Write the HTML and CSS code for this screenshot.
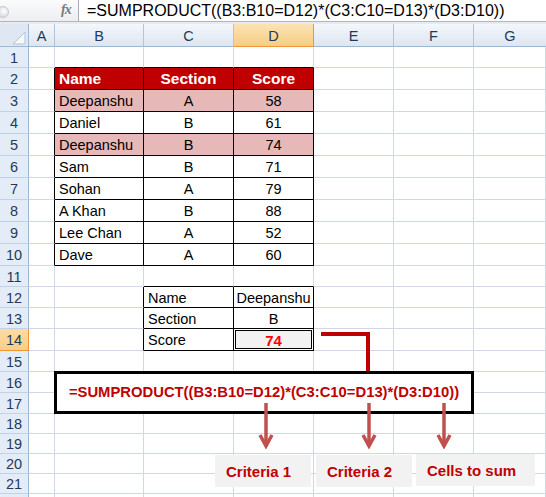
FILE: index.html
```html
<!DOCTYPE html>
<html>
<head>
<meta charset="utf-8">
<link rel="stylesheet" href="styles.css">
</head>
<body>
<div class="page">
  <div class="fbar">
    <div class="namebox"><span class="knob"></span><span class="fx">fx</span></div>
    <div class="ftext">=SUMPRODUCT((B3:B10=D12)*(C3:C10=D13)*(D3:D10))</div>
  </div>
  <div class="spacer"></div>
  <div class="sheet">
    <div class="corner"><svg class="tri" width="14" height="14" viewBox="0 0 14 14"><polygon points="13,1 13,13 1,13" fill="#f4f7fb" stroke="#b4c3d6" stroke-width="1"/></svg></div>
    <div class="ch">A</div><div class="ch">B</div><div class="ch">C</div><div class="ch sel">D</div><div class="ch">E</div><div class="ch">F</div><div class="ch last">G</div>

    <div class="rh">1</div><div class="c"></div><div class="c bb"></div><div class="c bb"></div><div class="c bb"></div><div class="c"></div><div class="c"></div><div class="c"></div>
    <div class="rh">2</div><div class="c br"></div><div class="c t hd">Name</div><div class="c t hd ctr">Section</div><div class="c t hd ctr">Score</div><div class="c"></div><div class="c"></div><div class="c"></div>
    <div class="rh">3</div><div class="c br"></div><div class="c t pk">Deepanshu</div><div class="c t pk ctr">A</div><div class="c t pk ctr">58</div><div class="c"></div><div class="c"></div><div class="c"></div>
    <div class="rh">4</div><div class="c br"></div><div class="c t">Daniel</div><div class="c t ctr">B</div><div class="c t ctr">61</div><div class="c"></div><div class="c"></div><div class="c"></div>
    <div class="rh">5</div><div class="c br"></div><div class="c t pk">Deepanshu</div><div class="c t pk ctr">B</div><div class="c t pk ctr">74</div><div class="c"></div><div class="c"></div><div class="c"></div>
    <div class="rh">6</div><div class="c br"></div><div class="c t">Sam</div><div class="c t ctr">B</div><div class="c t ctr">71</div><div class="c"></div><div class="c"></div><div class="c"></div>
    <div class="rh">7</div><div class="c br"></div><div class="c t">Sohan</div><div class="c t ctr">A</div><div class="c t ctr">79</div><div class="c"></div><div class="c"></div><div class="c"></div>
    <div class="rh">8</div><div class="c br"></div><div class="c t">A Khan</div><div class="c t ctr">B</div><div class="c t ctr">88</div><div class="c"></div><div class="c"></div><div class="c"></div>
    <div class="rh">9</div><div class="c br"></div><div class="c t">Lee Chan</div><div class="c t ctr">A</div><div class="c t ctr">52</div><div class="c"></div><div class="c"></div><div class="c"></div>
    <div class="rh">10</div><div class="c br"></div><div class="c t">Dave</div><div class="c t ctr">A</div><div class="c t ctr">60</div><div class="c"></div><div class="c"></div><div class="c"></div>
    <div class="rh">11</div><div class="c"></div><div class="c"></div><div class="c bb"></div><div class="c bb"></div><div class="c"></div><div class="c"></div><div class="c"></div>
    <div class="rh">12</div><div class="c"></div><div class="c br"></div><div class="c t">Name</div><div class="c t ctr">Deepanshu</div><div class="c"></div><div class="c"></div><div class="c"></div>
    <div class="rh">13</div><div class="c"></div><div class="c br"></div><div class="c t">Section</div><div class="c t ctr">B</div><div class="c"></div><div class="c"></div><div class="c"></div>
    <div class="rh sel">14</div><div class="c"></div><div class="c br"></div><div class="c t">Score</div><div class="c t res-cell"><div class="res">74</div></div><div class="c"></div><div class="c"></div><div class="c"></div>
    <div class="rh">15</div><div class="c"></div><div class="c"></div><div class="c"></div><div class="c"></div><div class="c"></div><div class="c"></div><div class="c"></div>
    <div class="rh">16</div><div class="c"></div><div class="c"></div><div class="c"></div><div class="c"></div><div class="c"></div><div class="c"></div><div class="c"></div>
    <div class="rh">17</div><div class="c"></div><div class="c"></div><div class="c"></div><div class="c"></div><div class="c"></div><div class="c"></div><div class="c"></div>
    <div class="rh">18</div><div class="c"></div><div class="c"></div><div class="c"></div><div class="c"></div><div class="c"></div><div class="c"></div><div class="c"></div>
    <div class="rh">19</div><div class="c"></div><div class="c"></div><div class="c"></div><div class="c"></div><div class="c"></div><div class="c"></div><div class="c"></div>
    <div class="rh">20</div><div class="c"></div><div class="c"></div><div class="c"></div><div class="c"></div><div class="c"></div><div class="c"></div><div class="c"></div>
    <div class="rh">21</div><div class="c"></div><div class="c"></div><div class="c"></div><div class="c"></div><div class="c"></div><div class="c"></div><div class="c"></div>
    <div class="rh"></div><div class="c"></div><div class="c"></div><div class="c"></div><div class="c"></div><div class="c"></div><div class="c"></div><div class="c"></div>
  </div>

  <div class="connector"></div>
  <div class="fbox">=SUMPRODUCT((B3:B10=D12)*(C3:C10=D13)*(D3:D10))</div>

  <svg class="arrow a1" width="16" height="46" viewBox="0 0 16 46"><line x1="8" y1="0" x2="8" y2="43" stroke="#c0504d" stroke-width="3.5"/><polyline points="2,32 8,43 14,32" fill="none" stroke="#c0504d" stroke-width="3.5" stroke-linejoin="miter"/></svg>
  <svg class="arrow a2" width="16" height="46" viewBox="0 0 16 46"><line x1="8" y1="0" x2="8" y2="43" stroke="#c0504d" stroke-width="3.5"/><polyline points="2,32 8,43 14,32" fill="none" stroke="#c0504d" stroke-width="3.5" stroke-linejoin="miter"/></svg>
  <svg class="arrow a3" width="16" height="46" viewBox="0 0 16 46"><line x1="8" y1="0" x2="8" y2="43" stroke="#c0504d" stroke-width="3.5"/><polyline points="2,32 8,43 14,32" fill="none" stroke="#c0504d" stroke-width="3.5" stroke-linejoin="miter"/></svg>

  <div class="label l1">Criteria 1</div>
  <div class="label l2">Criteria 2</div>
  <div class="label l3">Cells to sum</div>
</div>
</body>
</html>
```

FILE: styles.css
```css
html, body {
  margin: 0;
  padding: 0;
  background: #ffffff;
}

.page {
  position: relative;
  width: 546px;
  height: 497px;
  overflow: hidden;
  font-family: "Liberation Sans", Arial, sans-serif;
  color: #000;
}

/* formula bar */
.fbar {
  display: flex;
  height: 21px;
  border-bottom: 1px solid #a7b9d1;
  background: #fff;
}

.namebox {
  position: relative;
  width: 79px;
  flex: none;
  border-right: 1px solid #a3acb8;
  background: linear-gradient(#fbfbfc, #eceef1);
  box-sizing: border-box;
}

.knob {
  position: absolute;
  left: -3px;
  top: 6px;
  width: 10px;
  height: 10px;
  border-radius: 50%;
  background: radial-gradient(circle at 60% 40%, #ffffff, #c9ccd1);
  border: 1px solid #c4c8ce;
}

.fx {
  position: absolute;
  left: 61px;
  top: 2px;
  font-family: "Liberation Serif", "Times New Roman", serif;
  font-style: italic;
  font-weight: bold;
  font-size: 14px;
  color: #7a7a7a;
  letter-spacing: -1px;
}

.ftext {
  flex: 1;
  padding-left: 8px;
  font-size: 16px;
  line-height: 21px;
  white-space: nowrap;
  color: #000;
}

.spacer {
  height: 2px;
  background: #e4ebf5;
}

/* sheet grid */
.sheet {
  display: grid;
  grid-template-columns: 29px 26px 89px 90px 80px 80px 80px 1fr;
  grid-template-rows: 23px 21px repeat(9, 22px) 21px 21px 21px 22px 21px 21px 21px 20px 20px 20px 20px 20px;
}

.corner {
  background: #dfe7f3;
  border-right: 1px solid #9eb6ce;
  border-bottom: 1px solid #9eb6ce;
  display: flex;
  align-items: flex-end;
  justify-content: flex-end;
  padding: 0 2px 1px 0;
  box-sizing: border-box;
}

.tri {
  display: block;
}

.ch {
  background: linear-gradient(#f4f7fb, #dde6f1);
  border-right: 1px solid #b3c5da;
  border-bottom: 1px solid #9eb6ce;
  display: flex;
  align-items: center;
  justify-content: center;
  font-size: 14.5px;
  color: #24395a;
  padding-top: 2px;
  box-sizing: border-box;
}

.ch.sel {
  background: linear-gradient(#fbe3b5, #f7cd82);
  border-right-color: #f29536;
  border-bottom-color: #f29536;
}

.ch.last {
  border-right: none;
}

.rh {
  background: #e4ecf7;
  border-right: 1px solid #9eb6ce;
  border-bottom: 1px solid #c2d1e4;
  display: flex;
  align-items: center;
  justify-content: center;
  font-size: 14.5px;
  color: #24395a;
  padding-top: 1px;
  box-sizing: border-box;
}

.rh.sel {
  background: linear-gradient(#fbdca3, #f8cf86);
  border-right-color: #f29536;
  border-bottom-color: #f29536;
}

.c {
  border-right: 1px solid #d0d7e5;
  border-bottom: 1px solid #d0d7e5;
  display: flex;
  align-items: center;
  padding: 1px 3px 0 4px;
  font-size: 14.5px;
  white-space: nowrap;
  overflow: hidden;
  box-sizing: border-box;
  min-width: 0;
}

.c.ctr {
  justify-content: center;
  padding-left: 0;
  padding-right: 0;
}

.c.t {
  border-right-color: #000;
  border-bottom-color: #000;
}

.c.br {
  border-right-color: #000;
}

.c.bb {
  border-bottom-color: #000;
}

.c.hd {
  background: #c00000;
  color: #ffffff;
  font-weight: bold;
  font-size: 15.5px;
}

.c.pk {
  background: #e6b8b7;
}

.c.res-cell {
  padding: 1px;
  align-items: stretch;
}

.res {
  flex: 1;
  border: 1px solid #000;
  background: #f2f2f2;
  color: #ff0000;
  font-weight: bold;
  font-size: 15px;
  display: flex;
  align-items: center;
  justify-content: center;
  padding-top: 1px;
}

/* floating drawing objects */
.connector {
  position: absolute;
  left: 321px;
  top: 332px;
  width: 49px;
  height: 39px;
  border-top: 4px solid #c00000;
  border-right: 4px solid #c00000;
  box-sizing: border-box;
}

.fbox {
  position: absolute;
  left: 54px;
  top: 371px;
  width: 420px;
  height: 43px;
  box-sizing: border-box;
  border: 3px solid #000;
  background: #fff;
  display: flex;
  align-items: center;
  justify-content: center;
  font-weight: bold;
  font-size: 14.8px;
  color: #c00000;
  white-space: nowrap;
  padding-bottom: 1px;
}

.arrow {
  position: absolute;
  top: 403px;
}

.a1 { left: 258px; }
.a2 { left: 361px; }
.a3 { left: 436px; }

.label {
  position: absolute;
  top: 455px;
  height: 32px;
  background: #f2f2f2;
  box-sizing: border-box;
  padding-left: 11px;
  display: flex;
  align-items: center;
  font-weight: bold;
  font-size: 15px;
  color: #c00000;
  white-space: nowrap;
}

.l1 { left: 215px; width: 96px; }
.l2 { left: 316px; width: 96px; }
.l3 { left: 416px; width: 119px; top: 454px; }
```
